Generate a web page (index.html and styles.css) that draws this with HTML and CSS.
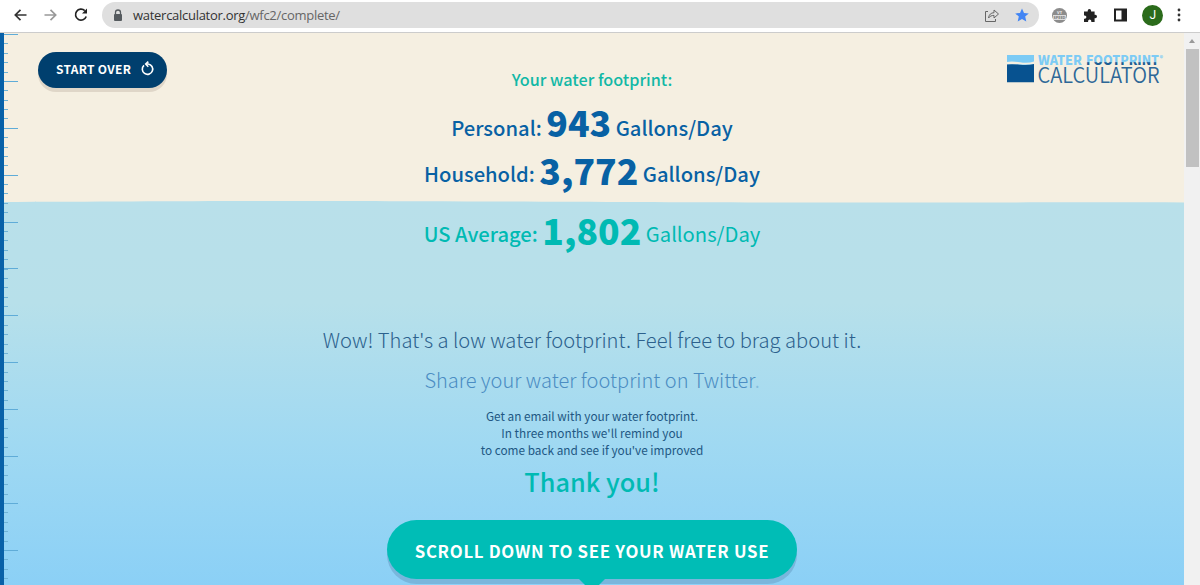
FILE: index.html
```html
<!DOCTYPE html>
<html lang="en">
<head>
  <meta charset="utf-8">
  <title>Water Footprint Calculator</title>
  <link rel="stylesheet" href="styles.css">
</head>
<body>
  <div class="toolbar">
    <svg class="nav-icons" width="90" height="30" viewBox="0 0 90 30" fill="none" stroke-width="1.7">
      <path d="M26.500 15H15.500M20.500 9.800L15.300 15l5.200 5.200" stroke="#333"/>
      <path d="M44.500 15h11M50.500 9.800l5.200 5.200-5.200 5.200" stroke="#999"/>
      <path d="M84.800 10.600A5.500 5.500 0 1 0 86.200 16.500" stroke="#222"/>
      <path d="M87 8.500v5h-5z" fill="#222"/>
    </svg>
    <div class="address">
      <svg width="10" height="13" viewBox="0 0 10 13">
        <path d="M2.500 6V3.500a2.500 2.500 0 0 1 5 0V6" fill="none" stroke="#555a5e" stroke-width="1.300"/>
        <rect x="1" y="5" width="8" height="7" rx="1" fill="#555a5e"/>
      </svg>
      <span class="url">watercalculator.org<span class="path">/wfc2/complete/</span></span>
      <svg class="share" width="16" height="15" viewBox="0 0 16 15" fill="none" stroke="#666" stroke-width="1">
        <path d="M4 3.500H1.500v10h10V11"/>
        <path d="M4.500 10c.6-3.600 2.400-5.200 5.500-5.300V2l4.500 4-4.500 4V7.400C7.500 7.400 6 8.200 4.500 10z"/>
      </svg>
      <svg class="star" width="14" height="14" viewBox="0 0 14 14">
        <path d="M7 .5l2 4.500 4.800.4-3.600 3.200 1.100 4.800L7 10.900l-4.300 2.500 1.100-4.800L.2 5.400 5 5z" fill="#4285f4"/>
      </svg>
    </div>
    <div class="extensions">
      <span class="speed"><span>VT</span><span class="plate">SPEED</span></span>
      <svg width="15" height="15" viewBox="0 0 15 15">
        <path d="M1 3.500h3.700V2.700a1.700 1.700 0 0 1 3.400 0v.8h3.500v3.300h.7a1.700 1.700 0 0 1 0 3.400h-.7V14H8.300v-.9a1.600 1.600 0 0 0-3.200 0v.9H1v-3.300h.8a1.500 1.500 0 0 0 0-3.200H1z" fill="#222"/>
      </svg>
      <svg width="13" height="14" viewBox="0 0 13 14">
        <path d="M0 .5h13v13H0zM2 2.500v9h5.500v-9z" fill="#222" fill-rule="evenodd"/>
      </svg>
      <span class="avatar">J</span>
      <svg width="4" height="14" viewBox="0 0 4 14" fill="#333">
        <circle cx="2" cy="2" r="1.400"/><circle cx="2" cy="7" r="1.400"/><circle cx="2" cy="12" r="1.400"/>
      </svg>
    </div>
  </div>
  <div class="window">
    <div class="page">
      <svg class="waterline" width="1184" height="5" viewBox="0 0 1184 5" preserveAspectRatio="none">
        <path d="M0 2C150 1.500 250 .5 420 1.200S700 2.600 860 2.600 1100 2 1184 2.500V5H0z" fill="#b9e0ea"/>
      </svg>
      <div class="ruler"></div>
      <div class="top">
        <a class="start-over" href="#">START OVER
          <svg width="14" height="15" viewBox="0 0 14 15" fill="none" stroke="#fff" stroke-width="1.600">
            <path d="M3 4.300A5.200 5.200 0 1 0 7.200 3H5"/>
            <path d="M7.300.6L4.700 3.100l2.600 2.600"/>
          </svg>
        </a>
        <svg class="logo" width="162" height="32" viewBox="0 0 162 32">
          <defs>
            <linearGradient id="dip" gradientUnits="userSpaceOnUse" x1="0" y1="0" x2="0" y2="12">
              <stop offset=".66" stop-color="#7ccbf5"/>
              <stop offset=".72" stop-color="#1d5d92"/>
            </linearGradient>
          </defs>
          <rect x="2" y="1" width="27" height="27" fill="#7ccbf5"/>
          <path d="M2 8q5-1 13 .3t14-.8v3H2z" fill="#f5efe1"/>
          <path d="M2 10.500q5-.8 13 .2t14-.8V28.300H2z" fill="#075290"/>
          <text class="logo-water" x="33" y="11" textLength="44" lengthAdjust="spacingAndGlyphs">WATER</text>
          <text class="logo-water logo-foot" x="81" y="11" textLength="73" lengthAdjust="spacingAndGlyphs">FOOTPRINT</text>
          <text class="logo-reg" x="154.500" y="7">®</text>
          <text class="logo-calc" x="32.500" y="28.500" textLength="122" lengthAdjust="spacingAndGlyphs">CALCULATOR</text>
        </svg>
      </div>
      <div class="results">
        <h1>Your water footprint:</h1>
        <p class="figure">Personal: <b>943</b> Gallons/Day</p>
        <p class="figure household">Household: <b>3,772</b> Gallons/Day</p>
        <p class="figure average">US Average: <b>1,802</b> <span class="unit">Gallons/Day</span></p>
        <p class="message">Wow! That's a low water footprint. Feel free to brag about it.</p>
        <p class="message tweet">Share your water footprint on Twitter<span class="dot">.</span></p>
        <p class="email">Get an email with your water footprint.<br>In three months we'll remind you<br>to come back and see if you've improved</p>
        <p class="thanks">Thank you!</p>
        <a class="scroll-down" href="#">SCROLL DOWN TO SEE YOUR WATER USE</a>
      </div>
    </div>
    <div class="scrollbar">
      <div class="arrow"></div>
      <div class="thumb"></div>
    </div>
  </div>
</body>
</html>
```
FILE: styles.css
```css
body {
  margin: 0;
  height: 585px;
  overflow: hidden;
  display: flex;
  flex-direction: column;
  font-family: "Noto Sans CJK SC", "Open Sans", sans-serif;
}
p, h1 {
  margin: 0;
}
a {
  text-decoration: none;
}

/* browser toolbar */
.toolbar {
  display: flex;
  align-items: center;
  box-sizing: border-box;
  height: 33px;
  padding-bottom: 2px;
  border-bottom: 1px solid #ccc;
  background: #fff;
}
.nav-icons {
  margin-right: 12px;
}
.address {
  display: flex;
  align-items: center;
  box-sizing: border-box;
  width: 937px;
  height: 26px;
  padding: 0 10px 0 11px;
  border-radius: 13px;
  background: #dfdfdf;
}
.url {
  margin-left: 10px;
  font: 13px/26px "Open Sans", sans-serif;
  letter-spacing: -.28px;
  color: #333;
}
.path {
  color: #666;
}
.share {
  margin-left: auto;
}
.star {
  margin-left: 15px;
}
.extensions {
  display: flex;
  align-items: center;
  flex: 1;
  justify-content: space-between;
  padding: 0 19px 0 13px;
}
.speed {
  display: flex;
  flex-direction: column;
  align-items: center;
  justify-content: center;
  width: 15px;
  height: 15px;
  border-radius: 50%;
  background: #8c8c8c;
  color: #eee;
  font: bold 4px/5px "Open Sans", sans-serif;
}
.plate {
  width: 13px;
  background: #ddd;
  color: #777;
  text-align: center;
}
.avatar {
  width: 21px;
  height: 21px;
  margin-right: -2px;
  border-radius: 50%;
  background: #2b6b1b;
  color: #fff;
  font: 12px/21px Roboto, sans-serif;
  text-align: center;
}

/* page */
.window {
  display: flex;
  flex: 1;
}
.page {
  position: relative;
  width: 1184px;
  background: linear-gradient(#f5efe1 170px, #b9e0ea 170px, #b7e0ea 270px, #a0d9f2 410px, #8bd0f6 552px);
}
.waterline {
  position: absolute;
  left: 0;
  top: 167px;
}
.ruler {
  position: absolute;
  left: 0;
  top: 0;
  bottom: 0;
  width: 14px;
  border-left: 4px solid #0861a8;
  background:
    repeating-linear-gradient(#5facd8 0 1px, transparent 1px 46.9px) 0 1px / 14px 100% no-repeat,
    repeating-linear-gradient(#6fb3d6 0 1px, transparent 1px 9.38px) 0 1px / 4px 100% no-repeat;
}
.top {
  display: flex;
  justify-content: space-between;
  align-items: flex-start;
  height: 36px;
  padding: 19px 17px 0 38px;
}
.start-over {
  display: flex;
  align-items: center;
  justify-content: space-between;
  box-sizing: border-box;
  width: 129px;
  height: 36px;
  padding: 0 12px 3px 18px;
  border-radius: 18px;
  background: #003f6e;
  box-shadow: 0 4px 0 #dfd6c8;
  color: #fff;
  font-size: 12px;
  line-height: 16px;
  font-weight: bold;
  letter-spacing: .3px;
}
.logo {
  margin-top: 2px;
  overflow: visible;
}
.logo-water {
  font-size: 13px;
  font-weight: 900;
  fill: #7ccbf5;
}
.logo-foot {
  fill: url(#dip);
}
.logo-reg {
  font-size: 7px;
  font-weight: bold;
  fill: #7ccbf5;
}
.logo-calc {
  font-size: 21.5px;
  font-weight: 350;
  fill: #2d6797;
}

/* results */
.results {
  display: flex;
  flex-direction: column;
  align-items: center;
  margin-top: -19px;
  color: #0861a4;
  text-align: center;
  white-space: nowrap;
}
h1 {
  font-size: 16.2px;
  line-height: 21px;
  font-weight: 500;
  color: #12b8a6;
}
.figure {
  font-size: 20.2px;
  line-height: 46px;
  font-weight: 500;
}
h1 + .figure {
  margin-top: 15px;
}
.figure b {
  font-size: 35.5px;
  line-height: 0;
  font-weight: 900;
  vertical-align: -1px;
}
.household b, .average b {
  vertical-align: -3px;
}
.average {
  margin-top: 14px;
  color: #00bab3;
}
.unit {
  font-weight: 400;
}
.message {
  margin-top: 63px;
  font-size: 20.15px;
  line-height: 40px;
  font-weight: 300;
  color: #2c618d;
}
.tweet {
  margin-top: 0;
  font-size: 20px;
  color: #4b8dc3;
}
.dot {
  opacity: .4;
}
.email {
  margin-top: 7px;
  font-size: 11.8px;
  line-height: 17.2px;
  color: #215783;
}
.thanks {
  margin-top: 2px;
  font-size: 25.3px;
  line-height: 40px;
  font-weight: 500;
  color: #00bab3;
}
.scroll-down {
  position: relative;
  box-sizing: border-box;
  width: 410px;
  height: 59px;
  margin-top: 19px;
  border-radius: 30px;
  background: #00bdb6;
  box-shadow: 0 5px 0 #79b6dc;
  color: #fff;
  font-size: 16.8px;
  line-height: 63px;
  font-weight: bold;
  letter-spacing: .7px;
}
.scroll-down::after {
  content: "";
  position: absolute;
  left: 191px;
  top: 58px;
  border: 14px solid transparent;
  border-top-color: #00bdb6;
}

/* scrollbar */
.scrollbar {
  display: flex;
  flex-direction: column;
  align-items: center;
  width: 16px;
  background: #f1f1f1;
}
.arrow {
  margin: 6px 0 6px;
  border: 3.5px solid transparent;
  border-top: 0;
  border-bottom: 4px solid #999;
}
.thumb {
  width: 13px;
  height: 118px;
  background: #c1c1c1;
}
```
